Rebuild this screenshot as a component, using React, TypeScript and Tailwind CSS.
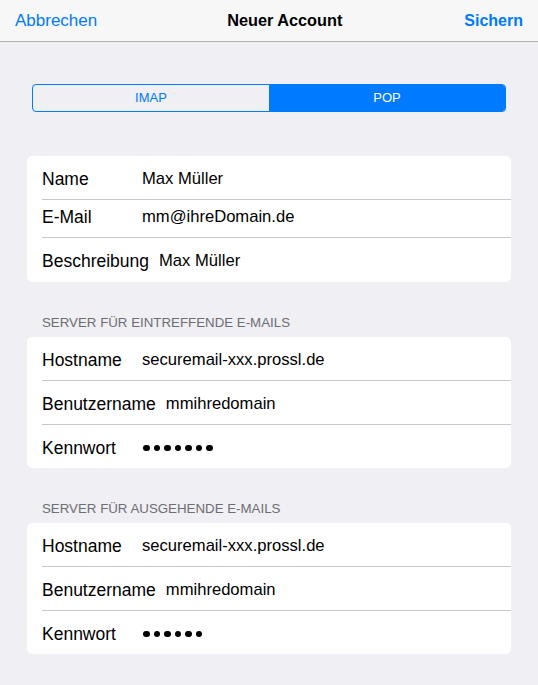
import { FC, Fragment } from "react"

type Field = {
  label: string
  value?: string
  dots?: number
  h: string
}

const account: Field[] = [
  { label: "Name", value: "Max Müller", h: "h-[43px] pt-[3px]" },
  { label: "E-Mail", value: "mm@ihreDomain.de", h: "h-[37px] pb-[3px]" },
  { label: "Beschreibung", value: "Max Müller", h: "h-[44px] pt-[3px]" },
]

const incoming: Field[] = [
  { label: "Hostname", value: "securemail-xxx.prossl.de", h: "h-[43px] pt-[3px]" },
  { label: "Benutzername", value: "mmihredomain", h: "h-[43px] pt-[3px]" },
  { label: "Kennwort", dots: 7, h: "h-[43px] pt-[3px]" },
]

const outgoing: Field[] = [
  { label: "Hostname", value: "securemail-xxx.prossl.de", h: "h-[43px] pt-[3px]" },
  { label: "Benutzername", value: "mmihredomain", h: "h-[43px] pt-[3px]" },
  { label: "Kennwort", dots: 6, h: "h-[43px] pt-[3px]" },
]

const Dots: FC<{ count: number }> = ({ count }) => (
  <span className="flex gap-[4px] pl-px" aria-label="Kennwort">
    {Array.from({ length: count }).map((_, i) => (
      <span key={i} className="block w-[6.5px] h-[6.5px] rounded-full bg-black" />
    ))}
  </span>
)

const Card: FC<{ rows: Field[] }> = ({ rows }) => (
  <div className="mx-[27px] bg-white rounded-[5px] overflow-hidden">
    {rows.map((r, i) => (
      <Fragment key={r.label}>
        {i > 0 && <div className="ml-[15px] h-px bg-[#c8c7cc]" />}
        <div className={`flex items-center pl-[15px] ${r.h}`}>
          <span className="shrink-0 min-w-[100px] pr-[10px] text-[17.5px] text-black">
            {r.label}
          </span>
          {r.dots ? (
            <Dots count={r.dots} />
          ) : (
            <span className="text-[16.6px] text-black">{r.value}</span>
          )}
        </div>
      </Fragment>
    ))}
  </div>
)

const SectionTitle: FC<{ children: string }> = ({ children }) => (
  <div className="px-[42px] pt-[33px] pb-[6px] text-[13.3px] leading-[16px] text-[#6d6d72] uppercase">
    {children}
  </div>
)

const App: FC = () => {
  return (
    <div
      className="min-h-[685px] w-full bg-[#efeff4] antialiased"
      style={{ fontFamily: '"Liberation Sans", Arial, sans-serif' }}
    >
      <header className="h-[42px] bg-[#f7f7f7] border-b border-[#b2b2b2] flex items-center justify-between px-[15px]">
        <button className="text-[17px] text-[#007aff]">Abbrechen</button>
        <h1 className="text-[16.3px] font-bold text-black pl-[8px]">Neuer Account</h1>
        <button className="text-[16px] font-bold text-[#007aff]">Sichern</button>
      </header>

      <div className="pt-[42px] px-[32px]">
        <div className="flex h-[28px] border border-[#007aff] rounded-[4px] overflow-hidden text-[13px]">
          <button className="flex-1 text-[#007aff]">IMAP</button>
          <button className="flex-1 bg-[#007aff] text-white">POP</button>
        </div>
      </div>

      <div className="pt-[44px]">
        <Card rows={account} />
      </div>

      <SectionTitle>Server für eintreffende E-Mails</SectionTitle>
      <Card rows={incoming} />

      <SectionTitle>Server für ausgehende E-Mails</SectionTitle>
      <div className="pb-[1px]">
        <Card rows={outgoing} />
      </div>
    </div>
  )
}

export default App
